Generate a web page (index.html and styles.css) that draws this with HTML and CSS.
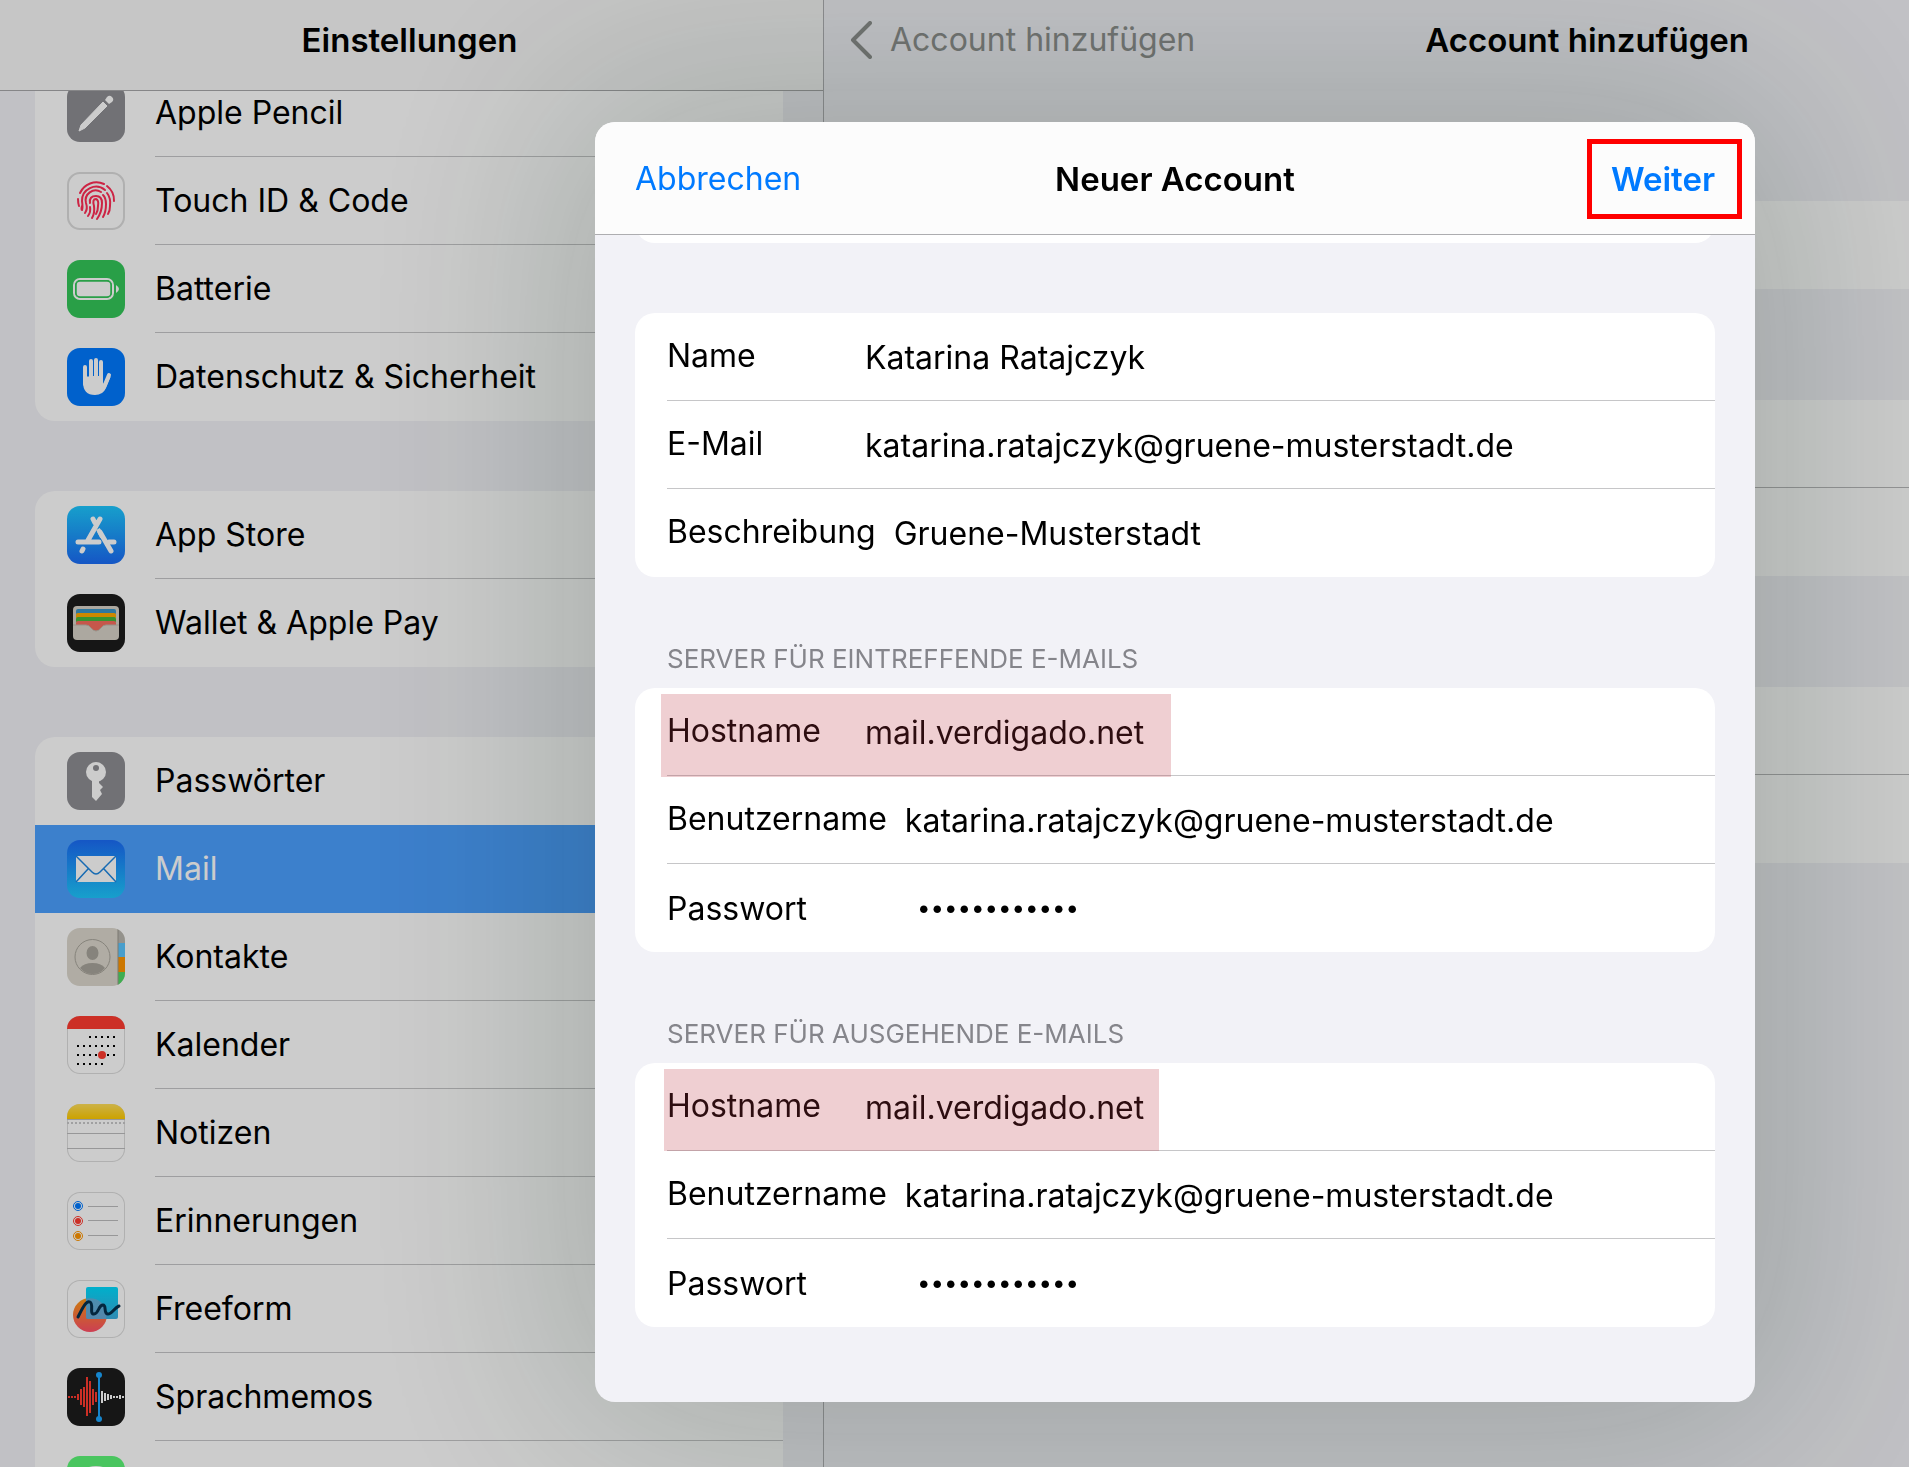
FILE: index.html
```html
<!DOCTYPE html>
<html lang="de">
  <head>
    <meta charset="UTF-8" />
    <meta name="viewport" content="width=device-width, initial-scale=1.0" />
    <title>Einstellungen</title>
    <link rel="stylesheet" href="styles.css">
  </head>
  <body>
    <div class="app">
      <!-- sidebar -->
      <aside class="sidebar">
        <header class="sidebar-header">
          <h1 class="title">Einstellungen</h1>
        </header>
        <nav class="list">
          <div class="group first">
            <a class="item" href="#">
              <svg class="icon gray" viewBox="0 0 58 58">
                <path d="M12 47 L14 41 L36 18 L40 22 L18 44 Z" fill="#fff" stroke="#fff" stroke-linejoin="round" />
                <path d="M38 16 l2-3 a3 3 0 0 1 5 5 l-3 2 z" fill="#fff" />
              </svg>
              <span class="text">Apple Pencil</span>
            </a>
            <a class="item" href="#">
              <svg class="icon framed thick" viewBox="0 0 58 58">
                <g fill="none" stroke="#ff2d55" stroke-width="2" stroke-linecap="round">
                  <path d="M13 21 A18 18 0 0 1 37 12" />
                  <path d="M40 14 A18 18 0 0 1 47 29" />
                  <path d="M11 27 Q11 31 12 34" />
                  <path d="M15 34 Q14 38 15 38 Q16 36 15 29 A14 14 0 0 1 38 18" />
                  <path d="M40 21 Q44 26 43 34 Q43 39 41 42" />
                  <path d="M18 41 Q21 37 19 31 A10 10 0 0 1 34 20" />
                  <path d="M36 23 Q39 26 39 32 Q39 40 36 45" />
                  <path d="M21 44 Q24 40 23 35" />
                  <path d="M23 31 Q22 24 29 24 Q35 24 35 31 Q35 40 30 47" />
                  <path d="M25 46 Q28 41 27 34 Q25 27 29 27 Q32 28 31 34 Q31 39 29 42" />
                </g>
              </svg>
              <span class="text">Touch ID &amp; Code</span>
            </a>
            <a class="item" href="#">
              <svg class="icon green" viewBox="0 0 58 58">
                <rect x="7" y="19" width="39" height="20" rx="6" fill="none" stroke="#fff" stroke-width="2" />
                <rect x="9" y="21" width="35" height="16" rx="4" fill="#fff" stroke="#34c759" stroke-width="1.5" />
                <path d="M49 25 q6 4 0 8 z" fill="#fff" />
              </svg>
              <span class="text">Batterie</span>
            </a>
            <a class="item" href="#">
              <svg class="icon blue" viewBox="0 0 58 58">
                <g stroke="#fff" stroke-width="4" stroke-linecap="round">
                  <path d="M18 19 V36 M24 13 V32 M29 12 V32 M34 14 V32" />
                  <path d="M42 27 L37 39" />
                </g>
                <path d="M16 28 H36 V36 L44 28 L39 40 Q36 47 28 47 Q16 47 16 34 Z" fill="#fff" />
                <path d="M21 18 V29 M26.500 16 V28 M31.500 16 V28" stroke="#007aff" />
              </svg>
              <span class="text">Datenschutz &amp; Sicherheit</span>
            </a>
          </div>

          <div class="group">
            <a class="item" href="#">
              <svg class="icon store" viewBox="0 0 58 58">
                <g stroke="#fff" stroke-width="5" stroke-linecap="round">
                  <path d="M33 13 L20 36 M26 13 L28 17 M11 36 H32 M42 36 H47 M16 43 L15 45" />
                  <path d="M33 26 L44 45" />
                </g>
                <path d="M31 23 L35 31" stroke="#fff" stroke-width="4" />
              </svg>
              <span class="text">App Store</span>
            </a>
            <a class="item" href="#">
              <svg class="icon black" viewBox="0 0 58 58">
                <rect x="6" y="12" width="46" height="34" rx="4" fill="#d8d3c8" />
                <rect x="9" y="15" width="40" height="6" rx="2" fill="#3a96c8" />
                <rect x="9" y="19" width="40" height="6" rx="2" fill="#ffab00" />
                <rect x="9" y="23" width="40" height="6" rx="2" fill="#46b83c" />
                <path d="M9 31 V29 q0-2 2-2 H47 q2 0 2 2 V31 H39 Q36 31 34 34 Q29 40 24 34 Q22 31 19 31 Z" fill="#f76d5e" />
                <path d="M6 31 H19 Q22 31 24 34 Q29 40 34 34 Q36 31 39 31 H52" fill="none" stroke="#bdb8ad" />
              </svg>
              <span class="text">Wallet &amp; Apple Pay</span>
            </a>
          </div>

          <div class="group last">
            <a class="item before-active" href="#">
              <svg class="icon gray" viewBox="0 0 58 58">
                <path d="M25 27 H32 V31 L36 35 L33 38 L35 42 L29 49 L25 45 Z" fill="#fff" />
                <circle cx="29" cy="20" r="10" fill="#fff" />
                <circle cx="29" cy="16" r="3" fill="#8e8e93" />
              </svg>
              <span class="text">Passwörter</span>
            </a>
            <a class="item active" href="#">
              <svg class="icon mail" viewBox="0 0 58 58">
                <rect x="9" y="16" width="40" height="26" fill="#fff" />
                <path d="M9 16 L25 32 Q29 36 33 32 L49 16 M9 42 L21 29 M49 42 L37 29" fill="none" stroke="#1d86e0" stroke-width="1.5" />
              </svg>
              <span class="text">Mail</span>
            </a>
            <a class="item" href="#">
              <svg class="icon contacts" viewBox="0 0 58 58">
                <rect x="51" width="7" height="15" fill="#bab7b0" />
                <rect x="51" y="15" width="7" height="14" fill="#5bc6ff" />
                <rect x="51" y="29" width="7" height="15" fill="#ff9500" />
                <rect x="51" y="44" width="7" height="14" fill="#4fd964" />
                <path d="M51 0 V58" stroke="#9b978d" />
                <circle cx="25.5" cy="29" r="17.5" fill="none" stroke="#a8a49b" />
                <ellipse cx="25.5" cy="25" rx="6" ry="7" fill="#a8a49b" />
                <path d="M13 40 Q17 35 25.500 35 Q34 35 38 40 Q33 46 25.500 46 Q18 46 13 40 Z" fill="#a8a49b" />
              </svg>
              <span class="text">Kontakte</span>
            </a>
            <a class="item" href="#">
              <svg class="icon framed" viewBox="0 0 58 58">
                <rect width="58" height="13" fill="#ff3b30" />
                <g stroke="#000" stroke-width="2" stroke-dasharray="2 4">
                  <path d="M22 21 H48 M10 30 H48 M10 39 H48 M10 48 H36" />
                </g>
                <circle cx="35" cy="39" r="4" fill="#ff3b30" />
              </svg>
              <span class="text">Kalender</span>
            </a>
            <a class="item" href="#">
              <svg class="icon framed" viewBox="0 0 58 58">
                <defs>
                  <linearGradient id="yellow" x2="0" y2="1">
                    <stop offset="0" stop-color="#ffdf5a" />
                    <stop offset="1" stop-color="#ffcb00" />
                  </linearGradient>
                </defs>
                <rect width="58" height="15" fill="url(#yellow)" />
                <path d="M0 15.500 H58 M0 29.500 H58 M0 44.500 H58" stroke="#bdbdbf" />
                <path d="M0 19 H58" stroke="#c8c8ca" stroke-width="2" stroke-dasharray="2 2" />
              </svg>
              <span class="text">Notizen</span>
            </a>
            <a class="item" href="#">
              <svg class="icon framed" viewBox="0 0 58 58">
                <g stroke="#bdbdbf">
                  <path d="M21 14.500 H51 M21 28.500 H51 M21 43.500 H51" />
                </g>
                <g fill="none">
                  <circle cx="11" cy="14" r="4.500" stroke="#007aff" />
                  <circle cx="11" cy="29" r="4.500" stroke="#ff3b30" />
                  <circle cx="11" cy="44" r="4.500" stroke="#ff9500" />
                </g>
                <circle cx="11" cy="14" r="3" fill="#007aff" />
                <circle cx="11" cy="29" r="3" fill="#ff3b30" />
                <circle cx="11" cy="44" r="3" fill="#ff9500" />
              </svg>
              <span class="text">Erinnerungen</span>
            </a>
            <a class="item" href="#">
              <svg class="icon framed" viewBox="0 0 58 58">
                <defs>
                  <linearGradient id="orange" x2="0" y2="1">
                    <stop offset="0" stop-color="#ff9c12" />
                    <stop offset="1" stop-color="#ff4f68" />
                  </linearGradient>
                  <linearGradient id="cyan" x2="0" y2="1">
                    <stop offset="0" stop-color="#00dcff" />
                    <stop offset="1" stop-color="#3caee0" />
                  </linearGradient>
                </defs>
                <circle cx="23" cy="35" r="17" fill="url(#orange)" />
                <rect x="19" y="7" width="32" height="32" rx="2" fill="url(#cyan)" />
                <path d="M19 18.500 Q36 16 40 34 L39 39 H21 Q19 39 19 37 Z" fill="#7fa6d2" opacity=".7" />
                <path d="M11 37 C15 29 19 20 23 22 C27 24 22 34 27 34 C32 34 31 25 36 25 C40 25 36 34 41 34 C45 34 47 28 52 26" fill="none" stroke="#05304d" stroke-width="3" stroke-linecap="round" />
              </svg>
              <span class="text">Freeform</span>
            </a>
            <a class="item" href="#">
              <svg class="icon black" viewBox="0 0 58 58">
                <path d="M2 28v2 M5 28v2 M8 28v2 M11 26v6 M14 21v16 M17 19v20 M20 9v39 M23 13v32 M26 21v16 M29 24v10" stroke="#ff3b30" stroke-width="2" />
                <path d="M35 23v12 M38 25v8 M41 26v6 M44 27v4 M47 28v2 M50 28v2 M53 27v4 M56 28v2" stroke="#fff" stroke-width="2" />
                <path d="M32 7 V51" stroke="#1ca7ff" stroke-width="2" />
                <circle cx="32" cy="7" r="3" fill="#1ca7ff" />
                <circle cx="32" cy="51" r="3" fill="#1ca7ff" />
              </svg>
              <span class="text">Sprachmemos</span>
            </a>
            <a class="item" href="#" aria-label="Nachrichten">
              <svg class="icon lime" viewBox="0 0 58 58">
                <ellipse cx="29" cy="26" rx="20" ry="16" fill="#fff" />
              </svg>
            </a>
          </div>
        </nav>
      </aside>

      <!-- detail -->
      <main class="detail">
        <header class="detail-header">
          <a class="back" href="#">
            <svg class="chevron" viewBox="0 0 22 38">
              <path d="M20 2 L3 19 L20 36" fill="none" stroke="currentColor" stroke-width="4" stroke-linecap="round" stroke-linejoin="round" />
            </svg>
            Account hinzufügen
          </a>
          <h2 class="title">Account hinzufügen</h2>
        </header>
        <div class="bands">
          <div class="band"></div>
          <div class="band double"></div>
          <div class="band double"></div>
        </div>
      </main>
    </div>

    <!-- dialog -->
    <div class="overlay">
      <form class="modal">
        <header class="modal-header">
          <button class="action" type="button">Abbrechen</button>
          <h2 class="title">Neuer Account</h2>
          <button class="action next" type="button">Weiter</button>
        </header>
        <div class="modal-body">
          <div class="card cut"></div>

          <div class="card">
            <div class="field">
              <label for="name">Name</label>
              <input id="name" type="text" value="Katarina Ratajczyk">
            </div>
            <div class="field">
              <label for="email">E-Mail</label>
              <input id="email" type="text" value="katarina.ratajczyk@gruene-musterstadt.de">
            </div>
            <div class="field">
              <label for="desc">Beschreibung</label>
              <input id="desc" type="text" value="Gruene-Musterstadt">
            </div>
          </div>

          <h3 class="caption">SERVER FÜR EINTREFFENDE E-MAILS</h3>
          <div class="card">
            <div class="field marked">
              <label for="in-host">Hostname</label>
              <input id="in-host" type="text" value="mail.verdigado.net">
            </div>
            <div class="field">
              <label for="in-user">Benutzername</label>
              <input id="in-user" type="text" value="katarina.ratajczyk@gruene-musterstadt.de">
            </div>
            <div class="field password">
              <label for="in-pass">Passwort</label>
              <input id="in-pass" type="password" value="musterstadt1">
            </div>
          </div>

          <h3 class="caption">SERVER FÜR AUSGEHENDE E-MAILS</h3>
          <div class="card">
            <div class="field marked narrow">
              <label for="out-host">Hostname</label>
              <input id="out-host" type="text" value="mail.verdigado.net">
            </div>
            <div class="field">
              <label for="out-user">Benutzername</label>
              <input id="out-user" type="text" value="katarina.ratajczyk@gruene-musterstadt.de">
            </div>
            <div class="field password">
              <label for="out-pass">Passwort</label>
              <input id="out-pass" type="password" value="musterstadt1">
            </div>
          </div>
        </div>
      </form>
    </div>
  </body>
</html>
```
FILE: styles.css
```css
* {
  margin: 0;
  padding: 0;
  box-sizing: border-box;
}
body {
  height: 100vh;
  overflow: hidden;
  font-family: Inter, "Liberation Sans", sans-serif;
  font-size: 32px;
  line-height: 40px;
  color: #000;
  background-color: #f2f2f7;
}
a {
  color: inherit;
  text-decoration: none;
}
.title {
  font-size: 33px;
  font-weight: 600;
}
.app {
  display: flex;
  height: 100vh;
}

/* sidebar */
.sidebar {
  display: flex;
  flex-direction: column;
  flex: 0 0 824px;
  border-right: 1px solid #b0b0b4;
}
.sidebar-header {
  flex: none;
  height: 91px;
  padding: 20px 4px 0 0;
  text-align: center;
  background-color: #f8f8f8;
  border-bottom: 1px solid #a8a8aa;
}
.list {
  flex: 1;
  min-height: 0;
  overflow: hidden;
  padding: 0 40px 0 35px;
}
.group {
  margin-bottom: 70px;
  background-color: #fff;
  border-radius: 20px;
  overflow: hidden;
}
/* scrolled a little under the header */
.first {
  margin-top: -22px;
}
.item {
  display: flex;
  gap: 30px;
  height: 88px;
  padding-left: 32px;
}
.icon {
  flex: none;
  width: 58px;
  height: 58px;
  margin-top: 15px;
  border-radius: 13px;
}
.text {
  flex: 1;
  padding-top: 24px;
  border-bottom: 1px solid #c6c6c8;
}
.item:last-child .text,
.before-active .text,
.active .text {
  border-bottom: none;
}
.active {
  color: #fff;
  background-color: #4ca0ff;
}

/* icons */
.gray {
  background-color: #8e8e93;
}
.green {
  background-color: #34c759;
}
.blue {
  background-color: #007aff;
}
.black {
  background-color: #1c1c1c;
}
.lime {
  background-color: #5cf777;
}
.store {
  background-image: linear-gradient(#1dc8ff, #1b6cf7);
}
.mail {
  background-image: linear-gradient(#1b6cf7, #1dc8ff);
}
.contacts {
  background-color: #dcd8cd;
}
.framed {
  background-color: #fff;
  box-shadow: inset 0 0 0 1px #dcdcdc;
}
.thick {
  box-shadow: inset 0 0 0 2px #dcdcdc;
}

/* detail */
.detail {
  flex: 1;
  min-width: 0;
}
.detail-header {
  display: flex;
  justify-content: space-between;
  height: 201px;
  padding: 20px 160px 0 26px;
}
.back {
  display: flex;
  gap: 18px;
  color: #8e908e;
}
.chevron {
  width: 22px;
  height: 38px;
  margin-top: 1px;
}
.bands {
  display: flex;
  flex-direction: column;
  gap: 111px;
}
.band {
  height: 88px;
  background-color: #fff;
}
.double {
  height: 176px;
  background-image: linear-gradient(#b8b8ba, #b8b8ba);
  background-position: 0 87px;
  background-size: 100% 1px;
  background-repeat: no-repeat;
}

/* dialog */
.overlay {
  position: fixed;
  inset: 0;
  z-index: 1;
  padding: 122px 154px 0 595px;
  background-color: rgba(0, 0, 0, 0.2);
}
.modal {
  border-radius: 20px;
  background-color: #f2f2f7;
  box-shadow: 0 0 220px 30px rgba(10, 40, 20, 0.2);
}
.modal-header {
  display: grid;
  grid-template-columns: 1fr auto 1fr;
  align-items: center;
  height: 113px;
  padding: 1px 40px 0;
  background-color: #fcfcfc;
  border-bottom: 1px solid #adadb0;
  border-radius: 20px 20px 0 0;
}
.action {
  position: relative;
  justify-self: start;
  border: none;
  background: none;
  font: inherit;
  color: #007aff;
}
.next {
  justify-self: end;
  font-size: 33px;
  font-weight: 600;
}
/* red frame round the button */
.next::after {
  content: "";
  position: absolute;
  inset: -20px -27px -20px -24px;
  border: 5px solid #f00;
}
.modal-body {
  padding: 0 40px 75px;
  overflow: hidden;
}
.card {
  background-color: #fff;
  border-radius: 20px;
}
/* bottom end of the card under the header */
.cut {
  height: 40px;
  margin: -32px 0 70px;
}
.caption {
  padding: 62px 32px 9px;
  font-size: 26px;
  font-weight: 400;
  color: #85858b;
}
.field {
  position: relative;
  display: flex;
  align-items: center;
  gap: 18px;
  height: 88px;
  margin-left: 32px;
  padding-top: 2px;
  border-bottom: 1px solid #c6c6c8;
}
.field:last-child {
  border-bottom: none;
}
.field label {
  min-width: 180px;
  padding-bottom: 4px;
}
.field input {
  flex: 1;
  min-width: 0;
  border: none;
  outline: none;
  background: none;
  font: inherit;
  color: inherit;
}
.password label {
  padding-bottom: 0;
}
.field input[type="password"] {
  padding: 0 0 2px 52px;
  font-size: 24px;
}
.marked::after {
  content: "";
  position: absolute;
  top: 6px;
  bottom: -2px;
  left: -6px;
  width: 510px;
  background-color: rgba(190, 55, 65, 0.24);
}
.narrow::after {
  bottom: -1px;
  left: -3px;
  width: 495px;
}
```
